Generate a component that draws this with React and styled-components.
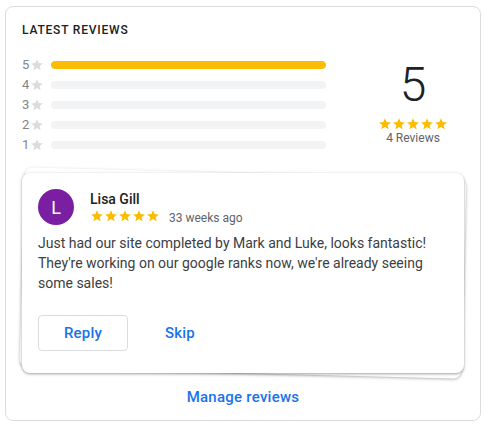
import React from "react";
import styled, { createGlobalStyle } from "styled-components";

const Global = createGlobalStyle`
  html, body { margin: 0; padding: 0; background: #fff; }
  body { font-family: Roboto, "Noto Sans", Arial, sans-serif; -webkit-font-smoothing: antialiased; }
  * { box-sizing: border-box; }
`;

const Card = styled.section`
  margin: 6px 0 0 5px;
  width: 476px;
  border: 1px solid #dadce0;
  border-radius: 8px;
  padding: 15px 16px 13px;
  background: #fff;
`;

const Title = styled.h2`
  margin: 0 0 17px;
  font-size: 12px;
  line-height: 16px;
  font-weight: 500;
  letter-spacing: 0.8px;
  color: #202124;
  text-transform: uppercase;
`;

const Top = styled.div`
  display: flex;
  justify-content: space-between;
  align-items: flex-start;
`;

const Rows = styled.div`
  width: 304px;
  display: flex;
  flex-direction: column;
`;

const Row = styled.div`
  display: flex;
  align-items: center;
  height: 20px;
`;

const Num = styled.span`
  font-size: 13px;
  line-height: 20px;
  color: #80868b;
  width: 8px;
`;

const Bar = styled.div`
  flex: 1;
  margin-left: 7px;
  height: 8px;
  border-radius: 4px;
  background: #f1f3f4;
  overflow: hidden;
`;

const Fill = styled.div`
  height: 100%;
  border-radius: 4px;
  background: #fbbc04;
`;

const Summary = styled.div`
  width: 102px;
  margin-top: 2px;
  display: flex;
  flex-direction: column;
  align-items: center;
`;

const Big = styled.div`
  font-size: 48px;
  line-height: 56px;
  font-weight: 300;
  color: #202124;
`;

const Stars = styled.div`
  display: flex;
  margin-top: ${(p) => p.$mt || 0}px;
  color: ${(p) => p.$color || "#fbbc04"};
`;

const Count = styled.div`
  font-size: 12px;
  line-height: 14px;
  color: #5f6368;
`;

const Stack = styled.div`
  position: relative;
  margin-top: 18px;
`;

const BackCard = styled.div`
  position: absolute;
  inset: 0;
  border-radius: 8px;
  background: #fff;
  transform: rotate(1.5deg);
  box-shadow: 0 1px 2px 0 rgba(60, 64, 67, 0.25), 0 1px 3px 1px rgba(60, 64, 67, 0.1);
`;

const Review = styled.div`
  position: relative;
  border-radius: 8px;
  background: #fff;
  padding: 16px 16px 22px;
  box-shadow: 0 1px 2px 0 rgba(60, 64, 67, 0.3), 0 1px 3px 1px rgba(60, 64, 67, 0.15);
`;

const Head = styled.div`
  display: flex;
  align-items: center;
  gap: 16px;
`;

const Avatar = styled.div`
  width: 36px;
  height: 36px;
  border-radius: 50%;
  background: #7b1fa2;
  color: #fff;
  font-size: 18px;
  display: flex;
  align-items: center;
  justify-content: center;
`;

const Who = styled.div`
  display: flex;
  flex-direction: column;
`;

const Name = styled.div`
  font-size: 14px;
  line-height: 20px;
  font-weight: 500;
  color: #202124;
`;

const Meta = styled.div`
  display: flex;
  align-items: flex-start;
  height: 16px;
`;

const Ago = styled.span`
  margin-left: 9px;
  margin-top: 1px;
  font-size: 12px;
  line-height: 16px;
  color: #5f6368;
`;

const Body = styled.p`
  margin: 8px 0 0;
  font-size: 14px;
  line-height: 20px;
  color: #3c4043;
`;

const Actions = styled.div`
  display: flex;
  gap: 7px;
  margin-top: 22px;
`;

const Btn = styled.button`
  width: 90px;
  height: 36px;
  border-radius: 4px;
  border: 1px solid ${(p) => (p.$outlined ? "#dadce0" : "transparent")};
  background: #fff;
  color: #1a73e8;
  font-family: inherit;
  font-size: 15px;
  font-weight: 500;
  letter-spacing: 0.2px;
  padding: 0;
  cursor: pointer;
`;

const Manage = styled.a`
  display: block;
  margin-top: 14px;
  text-align: center;
  font-size: 15px;
  line-height: 20px;
  font-weight: 500;
  letter-spacing: 0.25px;
  color: #1a73e8;
  text-decoration: none;
`;

const Star = ({ size = 14 }) => (
  <svg width={size} height={size} viewBox="0 0 24 24" fill="currentColor" style={{ display: "block" }}>
    <path d="M12 17.27L18.18 21l-1.64-7.03L22 9.24l-7.19-.61L12 2 9.19 8.63 2 9.24l5.46 4.73L5.82 21z" />
  </svg>
);

const FiveStars = (props) => (
  <Stars {...props}>
    {[0, 1, 2, 3, 4].map((i) => (
      <Star key={i} />
    ))}
  </Stars>
);

const dist = [
  { n: 5, v: 100 },
  { n: 4, v: 0 },
  { n: 3, v: 0 },
  { n: 2, v: 0 },
  { n: 1, v: 0 },
];

export default function App() {
  return (
    <>
      <Global />
      <Card>
        <Title>Latest Reviews</Title>
        <Top>
          <Rows>
            {dist.map((d) => (
              <Row key={d.n}>
                <Num>{d.n}</Num>
                <Stars $color="#dadce0">
                  <Star />
                </Stars>
                <Bar>
                  <Fill style={{ width: `${d.v}%` }} />
                </Bar>
              </Row>
            ))}
          </Rows>
          <Summary>
            <Big>5</Big>
            <FiveStars $mt={4} />
            <Count>4 Reviews</Count>
          </Summary>
        </Top>
        <Stack>
          <BackCard />
          <Review>
            <Head>
              <Avatar>L</Avatar>
              <Who>
                <Name>Lisa Gill</Name>
                <Meta>
                  <FiveStars />
                  <Ago>33 weeks ago</Ago>
                </Meta>
              </Who>
            </Head>
            <Body>
              Just had our site completed by Mark and Luke, looks fantastic! They're working on our google ranks now,
              we're already seeing some sales!
            </Body>
            <Actions>
              <Btn $outlined>Reply</Btn>
              <Btn>Skip</Btn>
            </Actions>
          </Review>
        </Stack>
        <Manage href="#">Manage reviews</Manage>
      </Card>
    </>
  );
}
